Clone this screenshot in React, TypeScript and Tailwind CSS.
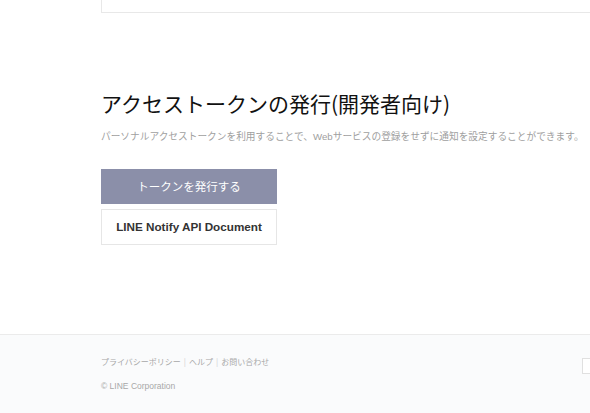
export default function App() {
  const links = ["プライバシーポリシー", "ヘルプ", "お問い合わせ"];

  return (
    <div className="w-[590px] h-[413px] overflow-hidden bg-white flex flex-col font-['Liberation_Sans','Noto_Sans_CJK_JP',sans-serif]">
      <main className="flex-1 pl-[101px] overflow-hidden">
        {/* bottom edge of the card above */}
        <div className="h-[13px] w-[600px] border-l border-b border-[#e8e8e8]" />

        <section className="pt-[75px]">
          <h2 className="text-[21px] leading-[30px] text-[#111] font-['Noto_Sans_CJK_JP',sans-serif] whitespace-nowrap">
            アクセストークンの発行(開発者向け)
          </h2>
          <p className="mt-[12px] text-[9.7px] leading-[14px] text-[#a0a0a0] whitespace-nowrap font-['Liberation_Sans','Noto_Sans_CJK_JP',sans-serif]">
            パーソナルアクセストークンを利用することで、Webサービスの登録をせずに通知を設定することができます。
          </p>

          <div className="mt-[25px] w-[176px] flex flex-col gap-[5px]">
            <button className="h-[35px] bg-[#8b8fa9] text-white text-[11.5px] font-['Noto_Sans_CJK_JP',sans-serif]">
              トークンを発行する
            </button>
            <button className="h-[36px] bg-white border border-[#e6e6e6] text-[#333] text-[11.7px] font-bold">
              LINE Notify API Document
            </button>
          </div>
        </section>
      </main>

      <footer className="h-[79px] shrink-0 border-t border-[#ebebeb] bg-[#fafbfc] pl-[101px] flex">
        <div className="w-[481px] shrink-0 pt-[21px]">
          <div className="flex items-center text-[8px] leading-[12px] text-[#a8a8a8] font-['Noto_Sans_CJK_JP',sans-serif]">
            {links.map((l, i) => (
              <span key={l} className="flex items-center">
                {i > 0 && <span className="mx-[3px] text-[#d0d0d0]">|</span>}
                {l}
              </span>
            ))}
          </div>
          <p className="mt-[12px] text-[8.5px] leading-[12px] text-[#a8a8a8]">© LINE Corporation</p>
        </div>
        <div className="mt-[23px] w-[100px] h-[16px] shrink-0 bg-white border border-[#e0e0e0]" />
      </footer>
    </div>
  );
}
